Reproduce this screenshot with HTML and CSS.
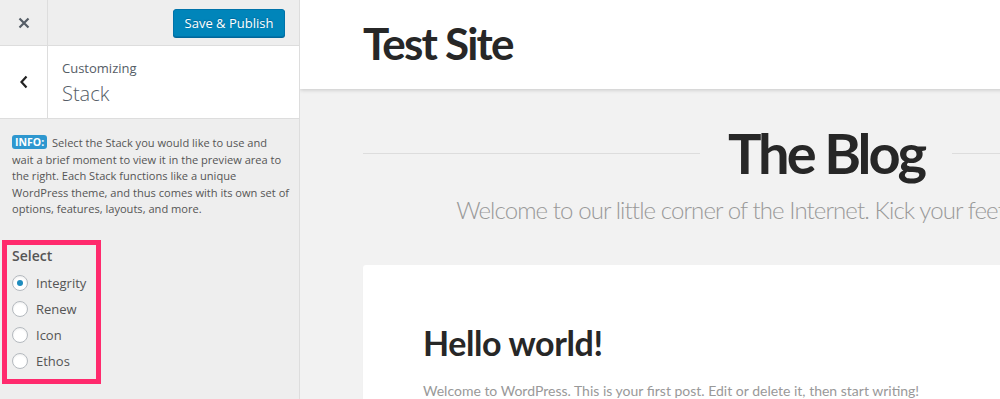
FILE: index.html
```html
<!DOCTYPE html>
<html>
<head>
<meta charset="utf-8">
<link rel="stylesheet" href="styles.css">
</head>
<body>
<div class="app">
  <aside class="sidebar">
    <div class="topbar">
      <button class="close" aria-label="Close">
        <svg width="12" height="12" viewBox="0 0 12 12"><path d="M1.5 1.5L10.5 10.5M10.5 1.5L1.5 10.5" stroke="#555d66" stroke-width="2.2" stroke-linecap="butt"/></svg>
      </button>
      <div class="topbar-actions">
        <button class="publish">Save &amp; Publish</button>
      </div>
    </div>
    <div class="section-head">
      <button class="back" aria-label="Back">
        <svg width="10" height="14" viewBox="0 0 10 14"><path d="M7.5 1.5L2.5 7L7.5 12.5" fill="none" stroke="#222" stroke-width="2.2"/></svg>
      </button>
      <div class="section-title">
        <span class="crumb">Customizing</span>
        <span class="title">Stack</span>
      </div>
    </div>
    <div class="panel">
      <p class="info"><span class="badge">INFO:</span> Select the Stack you would like to use and wait a brief moment to view it in the preview area to the right. Each Stack functions like a unique WordPress theme, and thus comes with its own set of options, features, layouts, and more.</p>
      <div class="control">
        <div class="control-title">Select</div>
        <label class="radio"><span class="dot checked"></span>Integrity</label>
        <label class="radio"><span class="dot"></span>Renew</label>
        <label class="radio"><span class="dot"></span>Icon</label>
        <label class="radio"><span class="dot"></span>Ethos</label>
        <div class="highlight"></div>
      </div>
    </div>
  </aside>
  <main class="preview">
    <div class="site">
      <header class="site-header">
        <div class="site-title">Test Site</div>
      </header>
      <div class="site-body">
        <div class="blog-title-row">
          <span class="rule"></span>
          <h1 class="blog-title">The Blog</h1>
          <span class="rule"></span>
        </div>
        <p class="tagline">Welcome to our little corner of the Internet. Kick your feet up and stay a while.</p>
        <article class="card">
          <h2 class="post-title">Hello world!</h2>
          <p class="post-text">Welcome to WordPress. This is your first post. Edit or delete it, then start writing!</p>
        </article>
      </div>
    </div>
  </main>
</div>
</body>
</html>
```

FILE: styles.css
```css
* { box-sizing: border-box; }
html, body { margin: 0; padding: 0; }
body {
  width: 1000px;
  height: 399px;
  overflow: hidden;
  font-family: "Open Sans", "Liberation Sans", sans-serif;
}
.app {
  display: flex;
  height: 399px;
}
.sidebar {
  width: 300px;
  flex: none;
  background: #eeeeee;
  border-right: 1px solid #dddddd;
  display: flex;
  flex-direction: column;
}
.topbar {
  height: 46px;
  display: flex;
  border-bottom: 1px solid #dddddd;
  background: #eeeeee;
}
.close, .back {
  width: 48px;
  flex: none;
  border: 0;
  border-right: 1px solid #dddddd;
  background: transparent;
  display: flex;
  align-items: center;
  justify-content: center;
  padding: 0;
}
.topbar-actions {
  flex: 1;
  display: flex;
  justify-content: flex-end;
  align-items: flex-start;
  padding: 9px 14px 0 0;
}
.publish {
  height: 28px;
  width: 112px;
  padding: 0 10px;
  background: #0085ba;
  border: 1px solid #0073aa;
  border-radius: 3px;
  color: #ffffff;
  font-family: "Open Sans", "Liberation Sans", sans-serif;
  font-size: 13px;
  line-height: 26px;
  box-shadow: 0 1px 0 #006799;
  text-shadow: 0 -1px 1px #006799;
}
.section-head {
  height: 73px;
  background: #ffffff;
  display: flex;
  border-bottom: 1px solid #dddddd;
}
.section-title {
  display: flex;
  flex-direction: column;
  padding: 12px 0 0 14px;
  color: #555d66;
}
.crumb {
  font-size: 13px;
  line-height: 20px;
}
.title {
  font-size: 20px;
  font-weight: 300;
  line-height: 30px;
  margin-top: 1px;
}
.panel {
  padding: 16px 9.5px 0 12px;
  flex: 1;
}
.info {
  margin: 0;
  font-size: 11.1px;
  line-height: 16.6px;
  color: #555555;
}
.badge {
  display: inline-block;
  vertical-align: 1px;
  background: #2e97cf;
  color: #ffffff;
  font-weight: 700;
  font-size: 10.5px;
  line-height: 14px;
  padding: 0 3px;
  border-radius: 3px;
  margin-right: 2px;
}
.control {
  position: relative;
  margin-top: 28px;
  width: 88px;
}
.control-title {
  font-size: 14px;
  font-weight: 600;
  color: #555555;
  line-height: 20px;
  margin-bottom: 4px;
}
.radio {
  display: flex;
  align-items: center;
  height: 26px;
  font-size: 13px;
  color: #555555;
}
.dot {
  width: 16px;
  height: 16px;
  border-radius: 50%;
  border: 1px solid #b4b9be;
  background: #ffffff;
  box-shadow: inset 0 1px 2px rgba(0,0,0,0.07);
  margin-right: 8px;
  display: flex;
  align-items: center;
  justify-content: center;
}
.dot.checked::before {
  content: "";
  width: 6px;
  height: 6px;
  border-radius: 50%;
  background: #1e8cbe;
}
.highlight {
  position: absolute;
  left: -10px;
  top: -6px;
  width: 99px;
  height: 144px;
  border: 5px solid #ff2a6d;
  pointer-events: none;
}
.preview {
  flex: 1;
  overflow: hidden;
  background: #f2f2f2;
}
.site {
  width: 1052px;
  font-family: Lato, "Liberation Sans", sans-serif;
}
.site-header {
  height: 89px;
  background: #ffffff;
  box-shadow: 0 1px 4px rgba(0,0,0,0.18);
  padding: 0 63px;
  display: flex;
  align-items: center;
  position: relative;
}
.site-title {
  font-size: 44px;
  font-weight: 700;
  color: #272727;
  letter-spacing: -1.8px;
  line-height: 1;
  margin-top: -3px;
}
.site-body {
  padding: 34px 63px 0;
}
.blog-title-row {
  display: flex;
  align-items: center;
  gap: 28px;
}
.rule {
  flex: 1;
  height: 1px;
  background: #dddddd;
}
.blog-title {
  margin: 0;
  font-size: 56px;
  font-weight: 700;
  color: #272727;
  letter-spacing: -3px;
  line-height: 60px;
}
.tagline {
  margin: 12px 0 0;
  text-align: center;
  font-size: 24px;
  font-weight: 300;
  color: #999999;
  letter-spacing: -0.9px;
  line-height: 30px;
}
.card {
  margin-top: 40px;
  background: #ffffff;
  border-radius: 3px;
  box-shadow: 0 1px 1px rgba(0,0,0,0.05);
  padding: 58px 60px 40px;
  height: 200px;
}
.post-title {
  margin: 0;
  font-size: 34px;
  font-weight: 700;
  color: #272727;
  letter-spacing: -0.4px;
  line-height: 40px;
}
.post-text {
  margin: 19px 0 0;
  font-size: 14px;
  color: #999999;
  letter-spacing: 0;
}
```
